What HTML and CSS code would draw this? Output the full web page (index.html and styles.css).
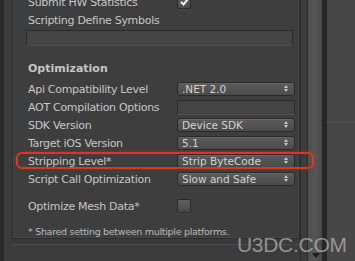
FILE: index.html
```html
<!DOCTYPE html>
<html lang="en">
<head>
    <meta charset="UTF-8">
    <meta name="viewport" content="width=device-width, initial-scale=1.0">
    <title>Player Settings - Other Settings</title>
    <link rel="stylesheet" href="styles.css">
</head>
<body>
    <div id="window">
        <div class="edge"></div>
        <div class="gutter"></div>
        <div class="inspector">
            <div class="box">
                <div class="row">
                    <span class="label">Submit HW Statistics</span>
                    <span class="checkbox checked">
                        <svg width="9" height="8" viewBox="0 0 9 8"><path d="M1 4 L3.5 6.5 L8 1" fill="none" stroke="#f2f2f2" stroke-width="2"/></svg>
                    </span>
                </div>
                <div class="row">
                    <span class="label">Scripting Define Symbols</span>
                </div>
                <div class="wide-field"></div>

                <div class="section">Optimization</div>
                <div class="row">
                    <span class="label">Api Compatibility Level</span>
                    <span class="dropdown">.NET 2.0</span>
                </div>
                <div class="row">
                    <span class="label">AOT Compilation Options</span>
                    <span class="field"></span>
                </div>
                <div class="row">
                    <span class="label">SDK Version</span>
                    <span class="dropdown">Device SDK</span>
                </div>
                <div class="row">
                    <span class="label">Target iOS Version</span>
                    <span class="dropdown">5.1</span>
                </div>
                <div class="row highlighted">
                    <span class="label">Stripping Level*</span>
                    <span class="dropdown">Strip ByteCode</span>
                    <span class="marker"></span>
                </div>
                <div class="row">
                    <span class="label">Script Call Optimization</span>
                    <span class="dropdown">Slow and Safe</span>
                </div>
                <div class="row spaced">
                    <span class="label">Optimize Mesh Data*</span>
                    <span class="checkbox"></span>
                </div>
                <div class="note">* Shared setting between multiple platforms.</div>
            </div>
            <div class="below"></div>
        </div>
        <div class="track"></div>
        <div class="scrollbar">
            <span class="arrow"></span>
        </div>
        <div class="divider"></div>
        <div class="side">
            <div class="side-top"></div>
        </div>
        <div class="watermark">U3DC.COM</div>
    </div>
</body>
</html>
```

FILE: styles.css
```css
body {
    margin: 0;
    background-color: #3d3d3d;
    font-family: "DejaVu Sans", sans-serif;
    font-size: 11px;
    letter-spacing: -0.3px;
    color: #c6c6c6;
}
#window {
    position: relative;
    display: flex;
    width: 355px;
    height: 261px;
    overflow: hidden;
}
.edge {
    width: 4px;
    background-color: #2a2a2a;
}
.gutter {
    width: 8px;
    background-color: #3b3b3b;
}
.inspector {
    width: 288px;
    display: flex;
    flex-direction: column;
}
.box {
    height: 246px;
    margin-top: -7px;
    padding: 0 4px 0 15px;
    border-left: 1px solid #2c2c2c;
    border-right: 1px solid #2c2c2c;
    border-bottom: 1px solid #2c2c2c;
    box-shadow: inset 1px 0 0 #464646, inset -1px 0 0 #464646, inset 0 -1px 0 #464646;
    background-color: #3e3e3e;
    box-sizing: border-box;
}
.below {
    flex: 1;
    border-top: 5px solid #3a3a3a;
    box-shadow: inset 0 1px 0 #4a4a4a;
    background-color: #3c3c3c;
}
.row {
    position: relative;
    display: flex;
    align-items: center;
    height: 18px;
}
.label {
    width: 149px;
    white-space: nowrap;
}
.checkbox {
    display: flex;
    align-items: center;
    justify-content: center;
    width: 12px;
    height: 12px;
    border: 1px solid #2a2a2a;
    border-radius: 2px;
    background: linear-gradient(#5e5e5e, #4a4a4a);
    box-shadow: 0 1px 0 #4c4c4c;
}
.wide-field {
    height: 14px;
    margin: 1px 2px 14px -2px;
    border: 1px solid #2b2b2b;
    border-bottom-color: #4e4e4e;
    background-color: #444444;
}
.section {
    height: 18px;
    line-height: 18px;
    font-weight: bold;
    letter-spacing: 0;
    margin-bottom: 2px;
}
.dropdown {
    position: relative;
    width: 112px;
    height: 12px;
    line-height: 12px;
    padding: 0 0 0 4px;
    border: 1px solid #2a2a2a;
    border-radius: 3px;
    background: linear-gradient(#5b5b5b, #4b4b4b);
    box-shadow: inset 0 1px 0 #666666;
    color: #d2d2d2;
    font-size: 10.5px;
    letter-spacing: 0;
}
.dropdown::after {
    content: "";
    position: absolute;
    right: 6px;
    top: 2px;
    width: 0;
    height: 0;
    border-left: 2px solid transparent;
    border-right: 2px solid transparent;
    border-bottom: 3px solid #c8c8c8;
}
.dropdown::before {
    content: "";
    position: absolute;
    right: 6px;
    top: 6px;
    width: 0;
    height: 0;
    border-left: 2px solid transparent;
    border-right: 2px solid transparent;
    border-top: 3px solid #c8c8c8;
}
.field {
    width: 116px;
    height: 13px;
    border: 1px solid #2b2b2b;
    border-bottom-color: #4e4e4e;
    background-color: #444444;
}
.marker {
    position: absolute;
    z-index: 1;
    left: -12px;
    top: 0;
    width: 294px;
    height: 13px;
    border: 2px solid #e2351f;
    border-radius: 6px;
    box-shadow: 0 0 2px rgba(226, 53, 31, 0.6);
}
.spaced {
    margin-top: 9px;
}
.note {
    margin-top: 10px;
    height: 14px;
    line-height: 14px;
    font-size: 9.5px;
    color: #b8b8b8;
}
.track {
    width: 8px;
    border-left: 1px solid #2e2e2e;
    border-right: 1px solid #2e2e2e;
    box-sizing: border-box;
    background-color: #3c3c3c;
}
.scrollbar {
    position: relative;
    width: 14px;
    background: linear-gradient(90deg, #4e4e4e, #555555, #4a4a4a);
}
.arrow {
    position: absolute;
    left: 4px;
    bottom: 3px;
    width: 0;
    height: 0;
    border-left: 4px solid transparent;
    border-right: 4px solid transparent;
    border-top: 5px solid #1e1e1e;
}
.divider {
    width: 5px;
    background-color: #262626;
}
.side {
    flex: 1;
    background-color: #474747;
}
.side-top {
    height: 122px;
    border-bottom: 1px solid #555555;
}
.watermark {
    position: absolute;
    z-index: 2;
    left: 237px;
    top: 233px;
    font-family: "Liberation Sans", sans-serif;
    font-size: 21px;
    color: rgba(205, 205, 205, 0.6);
}
```
